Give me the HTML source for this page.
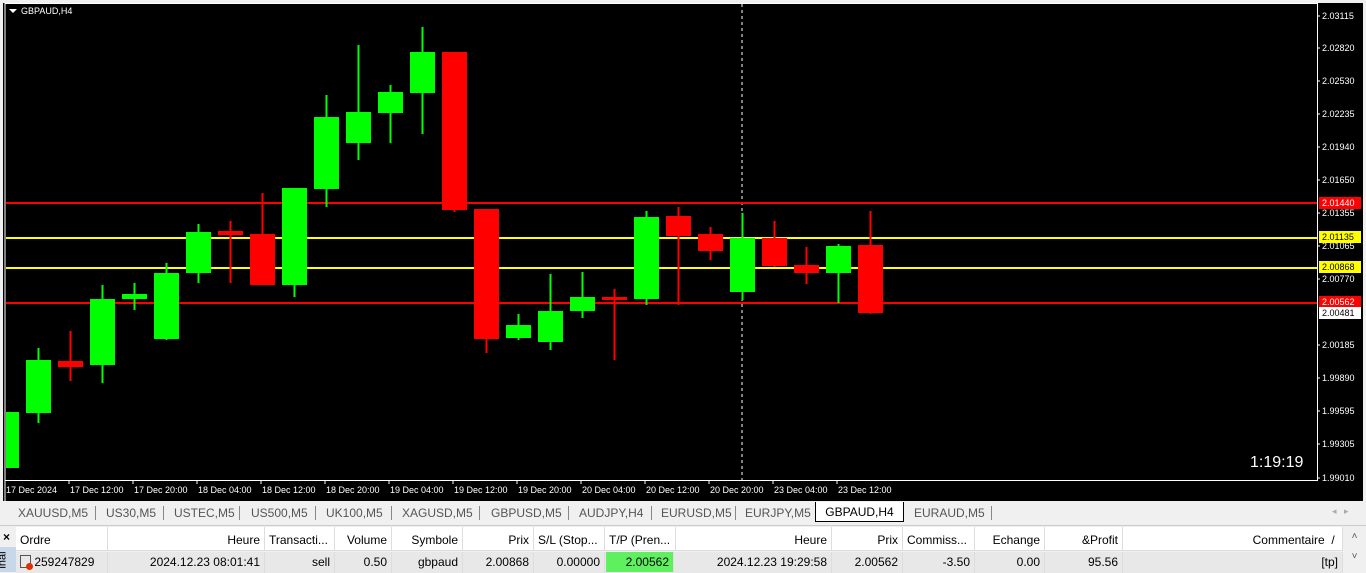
<!DOCTYPE html>
<html><head><meta charset="utf-8"><style>
*{margin:0;padding:0;box-sizing:border-box}
body{width:1366px;height:572px;overflow:hidden;background:#f0f0f0;font-family:"Liberation Sans",sans-serif;position:relative}
.tabs{position:absolute;left:0;top:502px;width:1366px;height:21px;background:#f0f0f0;font-size:12px;color:#555}
.tabs span{position:absolute;top:4px}
.sep{position:absolute;top:4px;width:1px;height:14px;background:#888}
.act{position:absolute;left:815px;top:502px;width:89px;height:20px;background:#fff;border:1px solid #000;border-top:none;font-size:12px;color:#000;text-align:center;padding-top:3px}
.tbl{position:absolute;left:16px;top:527px;width:1327px;font-size:12px;color:#000}
.c{position:absolute;height:24px;border-right:1px solid #ddd;padding:6px 4px 0;white-space:nowrap;overflow:hidden}
.r{text-align:right}
</style></head><body>
<div style="position:absolute;left:3px;top:3px;width:1360px;height:498px;background:#000"></div>
<svg style="position:absolute;left:0;top:0" width="1366" height="502">
<defs><clipPath id="cp"><rect x="6" y="4" width="1311" height="476"/></clipPath></defs>
<g clip-path="url(#cp)">
<line x1="742" y1="4" x2="742" y2="480" stroke="#fff" stroke-dasharray="3,3"/>
<rect x="5" y="202" width="1312" height="2" fill="#f00"/>
<rect x="5" y="237" width="1312" height="2" fill="#ff0"/>
<rect x="5" y="267" width="1312" height="2" fill="#ff0"/>
<rect x="5" y="302" width="1312" height="2" fill="#f00"/>
<g stroke-width="2">
<!-- wicks -->
<line x1="38.5" y1="348" x2="38.5" y2="423" stroke="#0f0"/>
<line x1="70.5" y1="331" x2="70.5" y2="381" stroke="#f00"/>
<line x1="102.5" y1="285" x2="102.5" y2="383" stroke="#0f0"/>
<line x1="134.5" y1="283" x2="134.5" y2="310" stroke="#0f0"/>
<line x1="166.5" y1="263" x2="166.5" y2="340" stroke="#0f0"/>
<line x1="198.5" y1="224" x2="198.5" y2="283" stroke="#0f0"/>
<line x1="230.5" y1="221" x2="230.5" y2="283" stroke="#f00"/>
<line x1="262.5" y1="193" x2="262.5" y2="285" stroke="#f00"/>
<line x1="294.5" y1="188" x2="294.5" y2="297" stroke="#0f0"/>
<line x1="326.5" y1="95" x2="326.5" y2="207" stroke="#0f0"/>
<line x1="358.5" y1="45" x2="358.5" y2="160" stroke="#0f0"/>
<line x1="390.5" y1="85" x2="390.5" y2="143" stroke="#0f0"/>
<line x1="422.5" y1="27" x2="422.5" y2="134" stroke="#0f0"/>
<line x1="454.5" y1="52" x2="454.5" y2="212" stroke="#f00"/>
<line x1="486.5" y1="209" x2="486.5" y2="353" stroke="#f00"/>
<line x1="518.5" y1="314" x2="518.5" y2="340" stroke="#0f0"/>
<line x1="550.5" y1="274" x2="550.5" y2="350" stroke="#0f0"/>
<line x1="582.5" y1="272" x2="582.5" y2="318" stroke="#0f0"/>
<line x1="614.5" y1="289" x2="614.5" y2="360" stroke="#f00"/>
<line x1="646.5" y1="211" x2="646.5" y2="305" stroke="#0f0"/>
<line x1="678.5" y1="207" x2="678.5" y2="305" stroke="#f00"/>
<line x1="710.5" y1="227" x2="710.5" y2="260" stroke="#f00"/>
<line x1="742.5" y1="213" x2="742.5" y2="300" stroke="#0f0"/>
<line x1="774.5" y1="221" x2="774.5" y2="267" stroke="#f00"/>
<line x1="806.5" y1="247" x2="806.5" y2="284" stroke="#f00"/>
<line x1="838.5" y1="244" x2="838.5" y2="303" stroke="#0f0"/>
<line x1="870.5" y1="211" x2="870.5" y2="314" stroke="#f00"/>
</g>
<rect x="-6" y="412" width="25" height="56" fill="#0f0"/>
<rect x="26" y="360" width="25" height="53" fill="#0f0"/>
<rect x="58" y="361" width="25" height="6" fill="#f00"/>
<rect x="90" y="299" width="25" height="66" fill="#0f0"/>
<rect x="122" y="294" width="25" height="5" fill="#0f0"/>
<rect x="154" y="273" width="25" height="66" fill="#0f0"/>
<rect x="186" y="232" width="25" height="41" fill="#0f0"/>
<rect x="218" y="231" width="25" height="4" fill="#f00"/>
<rect x="250" y="234" width="25" height="51" fill="#f00"/>
<rect x="282" y="188" width="25" height="97" fill="#0f0"/>
<rect x="314" y="117" width="25" height="72" fill="#0f0"/>
<rect x="346" y="112" width="25" height="31" fill="#0f0"/>
<rect x="378" y="92" width="25" height="21" fill="#0f0"/>
<rect x="410" y="52" width="25" height="41" fill="#0f0"/>
<rect x="442" y="52" width="25" height="158" fill="#f00"/>
<rect x="474" y="209" width="25" height="130" fill="#f00"/>
<rect x="506" y="325" width="25" height="13" fill="#0f0"/>
<rect x="538" y="311" width="25" height="31" fill="#0f0"/>
<rect x="570" y="297" width="25" height="14" fill="#0f0"/>
<rect x="602" y="297" width="25" height="3" fill="#f00"/>
<rect x="634" y="217" width="25" height="82" fill="#0f0"/>
<rect x="666" y="216" width="25" height="20" fill="#f00"/>
<rect x="698" y="234" width="25" height="17" fill="#f00"/>
<rect x="730" y="238" width="25" height="54" fill="#0f0"/>
<rect x="762" y="238" width="25" height="28" fill="#f00"/>
<rect x="794" y="265" width="25" height="8" fill="#f00"/>
<rect x="826" y="246" width="25" height="27" fill="#0f0"/>
<rect x="858" y="245" width="25" height="68" fill="#f00"/>
</g>
<polyline points="5,502 5,3.5 1317.5,3.5 1317.5,480.5 5,480.5" fill="none" stroke="#fff"/>
<polygon points="9,9 17,9 13,13" fill="#fff"/>
<text x="21" y="14" fill="#fff" font-size="9" font-family="Liberation Sans">GBPAUD,H4</text>
<text x="1250" y="467" fill="#fff" font-size="16" font-family="Liberation Sans">1:19:19</text>
<g fill="#fff" font-size="9" font-family="Liberation Sans">
<text x="1322" y="19">2.03115</text><text x="1322" y="51">2.02820</text><text x="1322" y="84">2.02530</text>
<text x="1322" y="117">2.02235</text><text x="1322" y="150">2.01940</text><text x="1322" y="183">2.01650</text>
<text x="1322" y="216">2.01355</text><text x="1322" y="249">2.01065</text><text x="1322" y="282">2.00770</text>
<text x="1322" y="348">2.00185</text><text x="1322" y="381">1.99890</text><text x="1322" y="414">1.99595</text>
<text x="1322" y="447">1.99305</text><text x="1322" y="481">1.99010</text>
</g>
<g stroke="#fff"><line x1="1317" y1="16" x2="1320" y2="16"/><line x1="1317" y1="48" x2="1320" y2="48"/><line x1="1317" y1="81" x2="1320" y2="81"/><line x1="1317" y1="114" x2="1320" y2="114"/><line x1="1317" y1="147" x2="1320" y2="147"/><line x1="1317" y1="180" x2="1320" y2="180"/><line x1="1317" y1="213" x2="1320" y2="213"/><line x1="1317" y1="246" x2="1320" y2="246"/><line x1="1317" y1="279" x2="1320" y2="279"/><line x1="1317" y1="345" x2="1320" y2="345"/><line x1="1317" y1="378" x2="1320" y2="378"/><line x1="1317" y1="411" x2="1320" y2="411"/><line x1="1317" y1="444" x2="1320" y2="444"/><line x1="1317" y1="478" x2="1320" y2="478"/></g>
<rect x="1319" y="197" width="42" height="12" fill="#f00"/><text x="1322" y="206" fill="#fff" font-size="9" font-family="Liberation Sans">2.01440</text>
<rect x="1319" y="231" width="42" height="12" fill="#ff0"/><text x="1322" y="240" fill="#000" font-size="9" font-family="Liberation Sans">2.01135</text>
<rect x="1319" y="261" width="42" height="12" fill="#ff0"/><text x="1322" y="270" fill="#000" font-size="9" font-family="Liberation Sans">2.00868</text>
<rect x="1319" y="296" width="42" height="12" fill="#f00"/><text x="1322" y="305" fill="#fff" font-size="9" font-family="Liberation Sans">2.00562</text>
<rect x="1319" y="307" width="42" height="12" fill="#fff"/><text x="1322" y="316" fill="#000" font-size="9" font-family="Liberation Sans">2.00481</text>
<g fill="#fff" font-size="9" font-family="Liberation Sans">
<text x="6" y="493">17 Dec 2024</text><text x="70" y="493">17 Dec 12:00</text><text x="134" y="493">17 Dec 20:00</text>
<text x="198" y="493">18 Dec 04:00</text><text x="262" y="493">18 Dec 12:00</text><text x="326" y="493">18 Dec 20:00</text>
<text x="390" y="493">19 Dec 04:00</text><text x="454" y="493">19 Dec 12:00</text><text x="518" y="493">19 Dec 20:00</text>
<text x="582" y="493">20 Dec 04:00</text><text x="646" y="493">20 Dec 12:00</text><text x="710" y="493">20 Dec 20:00</text>
<text x="774" y="493">23 Dec 04:00</text><text x="838" y="493">23 Dec 12:00</text>
</g>
<g stroke="#fff"><line x1="5" y1="481" x2="5" y2="484"/><line x1="69" y1="481" x2="69" y2="484"/><line x1="133" y1="481" x2="133" y2="484"/><line x1="197" y1="481" x2="197" y2="484"/><line x1="261" y1="481" x2="261" y2="484"/><line x1="325" y1="481" x2="325" y2="484"/><line x1="389" y1="481" x2="389" y2="484"/><line x1="453" y1="481" x2="453" y2="484"/><line x1="517" y1="481" x2="517" y2="484"/><line x1="581" y1="481" x2="581" y2="484"/><line x1="645" y1="481" x2="645" y2="484"/><line x1="709" y1="481" x2="709" y2="484"/><line x1="773" y1="481" x2="773" y2="484"/><line x1="837" y1="481" x2="837" y2="484"/></g>
</svg>
<div class="tabs">
<span style="left:18px">XAUUSD,M5</span><div class="sep" style="left:95px"></div>
<span style="left:106px">US30,M5</span><div class="sep" style="left:163px"></div>
<span style="left:174px">USTEC,M5</span><div class="sep" style="left:239px"></div>
<span style="left:251px">US500,M5</span><div class="sep" style="left:315px"></div>
<span style="left:326px">UK100,M5</span><div class="sep" style="left:391px"></div>
<span style="left:402px">XAGUSD,M5</span><div class="sep" style="left:479px"></div>
<span style="left:491px">GBPUSD,M5</span><div class="sep" style="left:568px"></div>
<span style="left:579px">AUDJPY,H4</span><div class="sep" style="left:651px"></div>
<span style="left:661px">EURUSD,M5</span><div class="sep" style="left:735px"></div>
<span style="left:745px">EURJPY,M5</span>
<span style="left:914px">EURAUD,M5</span><div class="sep" style="left:991px"></div>
<span style="left:1332px;color:#aaa;font-size:9px">◂&nbsp;&nbsp;&nbsp;▸</span>
</div>
<div class="act">GBPAUD,H4</div>
<div style="position:absolute;left:0;top:525px;width:1366px;height:1px;background:#ccc"></div>
<div style="position:absolute;left:3px;top:530px;font-size:12px;font-weight:bold">×</div>
<div style="position:absolute;left:0;top:547px;width:16px;height:25px;background:#c8d8e8;overflow:hidden"><div style="transform:rotate(-90deg);font-size:11px;position:absolute;left:-6px;top:7px">inal</div></div>
<div class="tbl">
<div style="position:absolute;left:0;top:0;width:1327px;height:24px;background:#fff;border-bottom:1px solid #ddd"></div>
<div style="position:absolute;left:0;top:25px;width:1327px;height:21px;background:#e8e8e8"></div>
<div class="c" style="left:0;width:92px">Ordre</div>
<div class="c r" style="left:92px;width:157px">Heure</div>
<div class="c" style="left:249px;width:70px">Transacti...</div>
<div class="c r" style="left:319px;width:57px">Volume</div>
<div class="c r" style="left:376px;width:71px">Symbole</div>
<div class="c r" style="left:447px;width:71px">Prix</div>
<div class="c" style="left:518px;width:71px">S/L (Stop...</div>
<div class="c" style="left:589px;width:71px">T/P (Pren...</div>
<div class="c r" style="left:660px;width:156px">Heure</div>
<div class="c r" style="left:816px;width:71px">Prix</div>
<div class="c" style="left:887px;width:72px">Commiss...</div>
<div class="c r" style="left:959px;width:70px">Echange</div>
<div class="c r" style="left:1029px;width:78px">&amp;Profit</div>
<div class="c r" style="left:1107px;width:220px">Commentaire &nbsp;/&nbsp;</div>
<div style="position:absolute;top:25px;left:0;width:1327px;height:21px">
<div class="c" style="left:0;width:92px;padding-top:3px;height:21px"><span style="display:inline-block;width:11px;height:13px;border:1px solid #555;vertical-align:-2px;position:relative"><span style="position:absolute;right:-3px;bottom:-3px;width:7px;height:7px;border-radius:50%;background:#e03000"></span></span> 259247829</div>
<div class="c r" style="left:92px;width:157px;padding-top:3px;height:21px">2024.12.23 08:01:41</div>
<div class="c r" style="left:249px;width:70px;padding-top:3px;height:21px">sell</div>
<div class="c r" style="left:319px;width:57px;padding-top:3px;height:21px">0.50</div>
<div class="c r" style="left:376px;width:71px;padding-top:3px;height:21px">gbpaud</div>
<div class="c r" style="left:447px;width:71px;padding-top:3px;height:21px">2.00868</div>
<div class="c r" style="left:518px;width:71px;padding-top:3px;height:21px">0.00000</div>
<div class="c r" style="left:590px;width:68px;padding-top:3px;height:20px;background:#5ef05e">2.00562</div>
<div class="c r" style="left:660px;width:156px;padding-top:3px;height:21px">2024.12.23 19:29:58</div>
<div class="c r" style="left:816px;width:71px;padding-top:3px;height:21px">2.00562</div>
<div class="c r" style="left:887px;width:72px;padding-top:3px;height:21px">-3.50</div>
<div class="c r" style="left:959px;width:70px;padding-top:3px;height:21px">0.00</div>
<div class="c r" style="left:1029px;width:78px;padding-top:3px;height:21px">95.56</div>
<div class="c r" style="left:1107px;width:220px;padding-top:3px;height:21px">[tp]</div>
</div>
</div>
<div style="position:absolute;left:1343px;top:527px;width:23px;height:45px;background:#f0f0f0;font-size:10px;color:#555;text-align:center;line-height:20px">˄<br>˅</div>
</body></html>
